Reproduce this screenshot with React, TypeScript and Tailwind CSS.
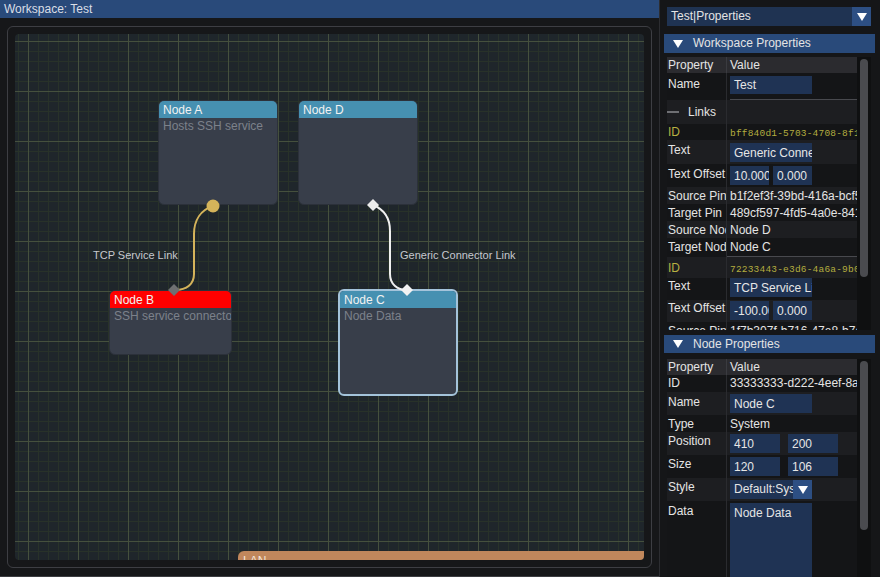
import React from "react";
import clsx from "clsx";

type RowDef = {
  label: React.ReactNode;
  h: string;
  lp: string;
  vp: string;
  alt: boolean;
  value?: React.ReactNode;
  labelCls?: string;
};

function Input({ text, w = "w-[82px]", h = "h-[19px]" }: { text: string; w?: string; h?: string }) {
  return (
    <div className={clsx("bg-[#1f3354] pl-[4px] overflow-hidden whitespace-nowrap text-[#e6e6e6] flex items-center", w, h)}>
      {text}
    </div>
  );
}

function Row({ r }: { r: RowDef }) {
  return (
    <div className={clsx("flex", r.h, r.alt ? "bg-[#1d1e21]" : "bg-[#141517]")}>
      <div
        className={clsx(
          "w-[59px] shrink-0 pl-[1px] overflow-hidden whitespace-nowrap leading-[16px]",
          r.lp,
          r.labelCls ?? "text-[#e4e4e4]"
        )}
      >
        {r.label}
      </div>
      <div className={clsx("flex-1 min-w-0 border-l border-[#2a2b2f] pl-[3px] overflow-hidden whitespace-nowrap leading-[16px] text-[#e4e4e4]", r.vp)}>
        {r.value}
      </div>
    </div>
  );
}

function HeaderRow() {
  return (
    <div className="flex h-[16px] bg-[#2b2b2f] leading-[16px] text-[#e4e4e4]">
      <div className="w-[59px] shrink-0 pl-[1px]">Property</div>
      <div className="flex-1 border-l border-[#3a3b40] pl-[3px]">Value</div>
    </div>
  );
}

function Tri({ cls }: { cls?: string }) {
  return (
    <svg width="10" height="8" viewBox="0 0 10 8" className={cls}>
      <polygon points="0,0 10,0 5,8" fill="#ffffff" />
    </svg>
  );
}

const Mono = ({ t }: { t: string }) => (
  <span className="font-['Liberation_Mono',monospace] text-[9.5px] text-[#b3ad3f] tracking-[0.2px]">{t}</span>
);

const wsRows: RowDef[] = [
  {
    label: "Name",
    h: "h-[27px]",
    lp: "pt-[3px]",
    vp: "pt-[3px]",
    alt: false,
    value: (
      <div>
        <Input text="Test" h="h-[18px]" />
        <div className="mt-[5px] ml-[0px] h-px bg-[#48494e]" />
      </div>
    ),
  },
  {
    label: (
      <div className="flex items-center h-[24px]">
        <div className="w-[12px] h-[2px] bg-[#6e6f73] ml-[-1px]" />
        <span className="ml-[9px]">Links</span>
      </div>
    ),
    h: "h-[24px]",
    lp: "pt-0",
    vp: "pt-0",
    alt: true,
  },
  { label: "ID", h: "h-[16px]", lp: "pt-[0px]", vp: "pt-[0px]", alt: false, labelCls: "text-[#b8b142]", value: <Mono t="bff840d1-5703-4708-8f15" /> },
  { label: "Text", h: "h-[24px]", lp: "pt-[2px]", vp: "pt-[3px]", alt: true, value: <Input text="Generic Connector Link" /> },
  {
    label: "Text Offset",
    h: "h-[23px]",
    lp: "pt-[2px]",
    vp: "pt-[2px]",
    alt: false,
    value: (
      <div className="flex gap-[4px]">
        <Input text="10.000" w="w-[39px]" />
        <Input text="0.000" w="w-[39px]" />
      </div>
    ),
  },
  { label: "Source Pin", h: "h-[17px]", lp: "pt-[1px]", vp: "pt-[1px]", alt: true, value: "b1f2ef3f-39bd-416a-bcf5" },
  { label: "Target Pin", h: "h-[17px]", lp: "pt-[1px]", vp: "pt-[1px]", alt: false, value: "489cf597-4fd5-4a0e-8411" },
  { label: "Source Node", h: "h-[17px]", lp: "pt-[1px]", vp: "pt-[1px]", alt: true, value: "Node D" },
  {
    label: "Target Node",
    h: "h-[19px]",
    lp: "pt-[1px]",
    vp: "pt-[1px]",
    alt: false,
    value: (
      <div>
        <div className="h-[17px]">Node C</div>
        <div className="ml-[-3px] h-px bg-[#48494e]" />
      </div>
    ),
  },
  { label: "ID", h: "h-[21px]", lp: "pt-[3px]", vp: "pt-[3px]", alt: true, labelCls: "text-[#b8b142]", value: <Mono t="72233443-e3d6-4a6a-9b04" /> },
  { label: "Text", h: "h-[22px]", lp: "pt-[0px]", vp: "pt-[0px]", alt: false, value: <Input text="TCP Service Link" /> },
  {
    label: "Text Offset",
    h: "h-[22px]",
    lp: "pt-[0px]",
    vp: "pt-[1px]",
    alt: true,
    value: (
      <div className="flex gap-[4px]">
        <Input text="-100.000" w="w-[39px]" />
        <Input text="0.000" w="w-[39px]" />
      </div>
    ),
  },
  { label: "Source Pin", h: "h-[17px]", lp: "pt-[1px]", vp: "pt-[1px]", alt: false, value: "1f7b307f-b716-47e8-b7a1" },
];

const nodeRows: RowDef[] = [
  { label: "ID", h: "h-[17px]", lp: "pt-[0px]", vp: "pt-[0px]", alt: false, value: "33333333-d222-4eef-8a11" },
  { label: "Name", h: "h-[23px]", lp: "pt-[2px]", vp: "pt-[2px]", alt: true, value: <Input text="Node C" /> },
  { label: "Type", h: "h-[17px]", lp: "pt-[1px]", vp: "pt-[1px]", alt: false, value: "System" },
  {
    label: "Position",
    h: "h-[23px]",
    lp: "pt-[1px]",
    vp: "pt-[2px]",
    alt: true,
    value: (
      <div className="flex gap-[8px]">
        <Input text="410" w="w-[50px]" />
        <Input text="200" w="w-[50px]" />
      </div>
    ),
  },
  {
    label: "Size",
    h: "h-[23px]",
    lp: "pt-[1px]",
    vp: "pt-[2px]",
    alt: false,
    value: (
      <div className="flex gap-[8px]">
        <Input text="120" w="w-[50px]" />
        <Input text="106" w="w-[50px]" />
      </div>
    ),
  },
  {
    label: "Style",
    h: "h-[23px]",
    lp: "pt-[1px]",
    vp: "pt-[2px]",
    alt: true,
    value: (
      <div className="flex w-[82px] h-[19px]">
        <div className="flex-1 min-w-0 bg-[#1f3354] pl-[4px] overflow-hidden whitespace-nowrap leading-[19px]">Default:System</div>
        <div className="w-[19px] bg-[#2d4f83] flex items-center justify-center">
          <Tri />
        </div>
      </div>
    ),
  },
  {
    label: "Data",
    h: "h-[76px]",
    lp: "pt-[2px]",
    vp: "pt-[2px]",
    alt: false,
    value: <div className="w-[82px] h-[80px] bg-[#1f3354] pl-[4px] pt-[2px] leading-[16px]">Node Data</div>,
  },
];

function Node({
  pos,
  header,
  title,
  sub,
  selected,
}: {
  pos: string;
  header: string;
  title: string;
  sub?: string;
  selected?: boolean;
}) {
  return (
    <div
      className={clsx(
        "absolute rounded-[6px] bg-[#383e4a] overflow-hidden",
        selected ? "border-2 border-[#a4c3da]" : "border border-[#2c313a]",
        pos
      )}
    >
      <div className={clsx("h-[17px] pl-[4px] pt-[1px] leading-[16px] text-[#f2f2f2] whitespace-nowrap", header)}>{title}</div>
      {sub && <div className="pl-[4px] leading-[16px] text-[#7c818a] whitespace-nowrap">{sub}</div>}
    </div>
  );
}

export default function App() {
  return (
    <div className="w-[880px] h-[577px] bg-[#151618] flex overflow-hidden font-['Liberation_Sans',Arial,sans-serif] text-[12px]">
      {/* Left window */}
      <div className="w-[659px] h-[577px] flex flex-col border-b border-[#3c3d41]">
        <div className="h-[18px] bg-[#294a7a] pl-[4px] leading-[18px] text-[#d9dee6]">Workspace: Test</div>
        <div className="flex-1 pl-[7px] pr-[7px] pt-[8px] pb-[8px] bg-[#161719]">
          <div className="h-full border border-[#3d3e43] rounded-[6px] p-[7px]">
            <div className="relative w-full h-full overflow-hidden rounded-[4px] bg-[#1f262b]">
              <svg className="absolute inset-0" width="629" height="527">
                <defs>
                  <pattern id="minor" width="10" height="10" patternUnits="userSpaceOnUse" x="3" y="7">
                    <rect width="10" height="1" fill="#283229" />
                    <rect width="1" height="10" fill="#283229" />
                  </pattern>
                  <pattern id="major" width="50" height="50" patternUnits="userSpaceOnUse" x="13" y="7">
                    <rect width="50" height="1" fill="#45503d" />
                    <rect width="1" height="50" fill="#45503d" />
                  </pattern>
                </defs>
                <rect width="629" height="527" fill="url(#minor)" />
                <rect width="629" height="527" fill="url(#major)" />
              </svg>

              <Node pos="left-[143px] top-[66px] w-[120px] h-[105px]" header="bg-[#4690b1]" title="Node A" sub="Hosts SSH service" />
              <Node pos="left-[283px] top-[66px] w-[120px] h-[105px]" header="bg-[#4690b1]" title="Node D" />
              <Node pos="left-[94px] top-[256px] w-[123px] h-[65px]" header="bg-[#ff0000]" title="Node B" sub="SSH service connector" />
              <Node pos="left-[323px] top-[255px] w-[120px] h-[107px]" header="bg-[#4690b1]" title="Node C" sub="Node Data" selected />

              <div className="absolute left-[223px] top-[517px] w-[420px] h-[30px] bg-[#c0875c] rounded-tl-[6px] pl-[5px] pt-[2px] leading-[16px] text-[#f3e6da]">
                LAN
              </div>

              <div className="absolute left-[78px] top-[213px] leading-[16px] text-[11px] text-[#c6c9cd] whitespace-nowrap">TCP Service Link</div>
              <div className="absolute left-[385px] top-[213px] leading-[16px] text-[11px] text-[#c6c9cd] whitespace-nowrap">Generic Connector Link</div>

              <svg className="absolute inset-0" width="629" height="527">
                <path d="M198,172 C186,176 179,186 179,200 L179,240 C179,250 172,256 160,256" stroke="#d4b35a" strokeWidth="2" fill="none" />
                <path d="M358,171 C368,175 375,183 375,197 L375,240 C375,250 382,256 392,256" stroke="#f0f0f0" strokeWidth="2" fill="none" />
                <circle cx="198" cy="172" r="6.5" fill="#d4b35a" />
                <polygon points="159,250 165,256 159,262 153,256" fill="#6f7072" />
                <polygon points="358,165 364,171 358,177 352,171" fill="#ececec" />
                <polygon points="392,250 398,256 392,262 386,256" fill="#f2f2f2" />
              </svg>
            </div>
          </div>
        </div>
      </div>

      {/* Right panel */}
      <div className="w-[221px] h-[577px] border-l border-[#2c2d31] flex flex-col text-[#e4e4e4]">
        <div className="mt-[7px] ml-[7px] w-[204px] h-[19px] flex">
          <div className="flex-1 bg-[#1f3352] pl-[4px] leading-[19px]">Test|Properties</div>
          <div className="w-[19px] bg-[#2d4f83] flex items-center justify-center">
            <Tri />
          </div>
        </div>
        <div className="mt-[8px] ml-[4px] w-[211px] h-[19px] bg-[#294a7a] flex items-center">
          <Tri cls="ml-[9px]" />
          <span className="ml-[10px] leading-[19px]">Workspace Properties</span>
        </div>
        <div className="mt-[4px] ml-[7px] h-[273px] flex overflow-hidden">
          <div className="w-[190px] overflow-hidden">
            <HeaderRow />
            {wsRows.map((r, i) => (
              <Row key={i} r={r} />
            ))}
          </div>
          <div className="w-[14px] bg-[#0f1011] pt-[2px]">
            <div className="ml-[3px] w-[8px] h-[218px] rounded-full bg-[#4a4b4f]" />
          </div>
        </div>
        <div className="mt-[5px] ml-[4px] w-[211px] h-[18px] bg-[#294a7a] flex items-center">
          <Tri cls="ml-[9px]" />
          <span className="ml-[10px] leading-[18px]">Node Properties</span>
        </div>
        <div className="mt-[6px] ml-[7px] flex-1 flex overflow-hidden">
          <div className="w-[190px] overflow-hidden">
            <HeaderRow />
            {nodeRows.map((r, i) => (
              <Row key={i} r={r} />
            ))}
          </div>
          <div className="w-[14px] bg-[#0f1011] pt-[2px]">
            <div className="ml-[3px] w-[8px] h-[169px] rounded-full bg-[#4a4b4f]" />
          </div>
        </div>
      </div>
    </div>
  );
}
